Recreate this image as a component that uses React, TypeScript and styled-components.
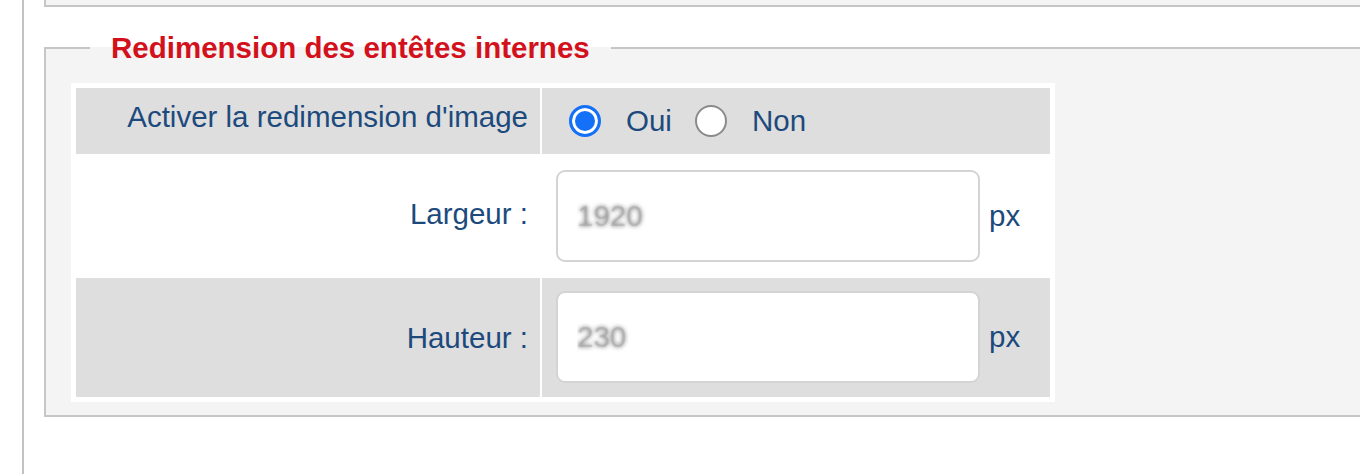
import React from "react";
import styled, { createGlobalStyle } from "styled-components";

const Global = createGlobalStyle`
  html, body { margin: 0; padding: 0; background: #fff; }
  body { font-family: "Liberation Sans", Arial, Helvetica, sans-serif; }
`;

const Page = styled.div`
  margin-left: 22px;
  border-left: 2px solid #c2c2c2;
  padding-left: 20px;
  min-height: 474px;
  box-sizing: border-box;
  overflow: hidden;
`;

const TopBox = styled.div`
  height: 5px;
  background: #f4f4f4;
  border-left: 2px solid #c6c6c6;
  border-bottom: 2px solid #c6c6c6;
`;

const Fieldset = styled.fieldset`
  margin: 27px 0 0 0;
  padding: 21px 0 13px 25px;
  border: 2px solid #c6c6c6;
  border-right: none;
  background: #f4f4f4;
  min-width: 0;
`;

const Legend = styled.legend`
  margin-left: 19px;
  padding: 0 21px;
  font-size: 29.5px;
  line-height: 28px;
  font-weight: bold;
  color: #d3111c;
  background: transparent;
`;

const Table = styled.table`
  width: 984px;
  border: 3px solid #fff;
  border-spacing: 2px;
  border-collapse: separate;
  background: #fff;
`;

const Row = styled.tr<{ $shade?: boolean }>`
  background: ${(p) => (p.$shade ? "#dedede" : "#fff")};
`;

const LabelCell = styled.td<{ $lift?: number }>`
  width: 452px;
  padding: 0 12px ${(p) => p.$lift ?? 0}px 0;
  text-align: right;
  vertical-align: middle;
  font-size: 29.5px;
  color: #1d4a7d;
  white-space: nowrap;
`;

const ValueCell = styled.td<{ $pt?: number; $pb?: number }>`
  padding: ${(p) => p.$pt ?? 0}px 0 ${(p) => p.$pb ?? 0}px 14px;
  vertical-align: middle;
  font-size: 29.5px;
  color: #1d4a7d;
`;

const RadioGroup = styled.div`
  display: flex;
  align-items: center;
  height: 66px;
  padding-left: 13px;
`;

const Radio = styled.input.attrs({ type: "radio" })`
  appearance: none;
  -webkit-appearance: none;
  box-sizing: border-box;
  width: 32px;
  height: 32px;
  margin: 0 25px 0 0;
  border-radius: 50%;
  border: 2px solid #8a8a8a;
  background: #fff;
  &:checked {
    border: 3px solid #1470f7;
    background: #1470f7;
    box-shadow: inset 0 0 0 3px #fff;
  }
`;

const RadioText = styled.label`
  margin-right: 23px;
  cursor: pointer;
`;

const Field = styled.div`
  display: flex;
  align-items: center;
`;

const NumberInput = styled.input`
  box-sizing: border-box;
  width: 424px;
  height: 92px;
  border: 2px solid #d4d4d4;
  border-radius: 9px;
  background: #fff;
  padding: 0 0 0 19px;
  font-family: "Liberation Sans", Arial, sans-serif;
  font-size: 29.5px;
  color: rgba(150, 150, 150, 0.35);
  text-shadow: 0 0 4px #7a7a7a;
  outline: none;
`;

const Unit = styled.span`
  margin-left: 9px;
  font-size: 29.5px;
  color: #1d4a7d;
`;

export default function App() {
  return (
    <>
      <Global />
      <Page>
        <TopBox />
        <Fieldset>
          <Legend>Redimension des entêtes internes</Legend>
          <Table>
            <tbody>
              <Row $shade>
                <LabelCell $lift={9}>Activer la redimension d'image</LabelCell>
                <ValueCell>
                  <RadioGroup>
                    <Radio id="oui" name="resize" defaultChecked />
                    <RadioText htmlFor="oui">Oui</RadioText>
                    <Radio id="non" name="resize" />
                    <RadioText htmlFor="non">Non</RadioText>
                  </RadioGroup>
                </ValueCell>
              </Row>
              <Row>
                <LabelCell $lift={4}>Largeur :</LabelCell>
                <ValueCell $pt={14} $pb={14}>
                  <Field>
                    <NumberInput defaultValue="1920" />
                    <Unit>px</Unit>
                  </Field>
                </ValueCell>
              </Row>
              <Row $shade>
                <LabelCell>Hauteur :</LabelCell>
                <ValueCell $pt={13} $pb={14}>
                  <Field>
                    <NumberInput defaultValue="230" />
                    <Unit>px</Unit>
                  </Field>
                </ValueCell>
              </Row>
            </tbody>
          </Table>
        </Fieldset>
      </Page>
    </>
  );
}
